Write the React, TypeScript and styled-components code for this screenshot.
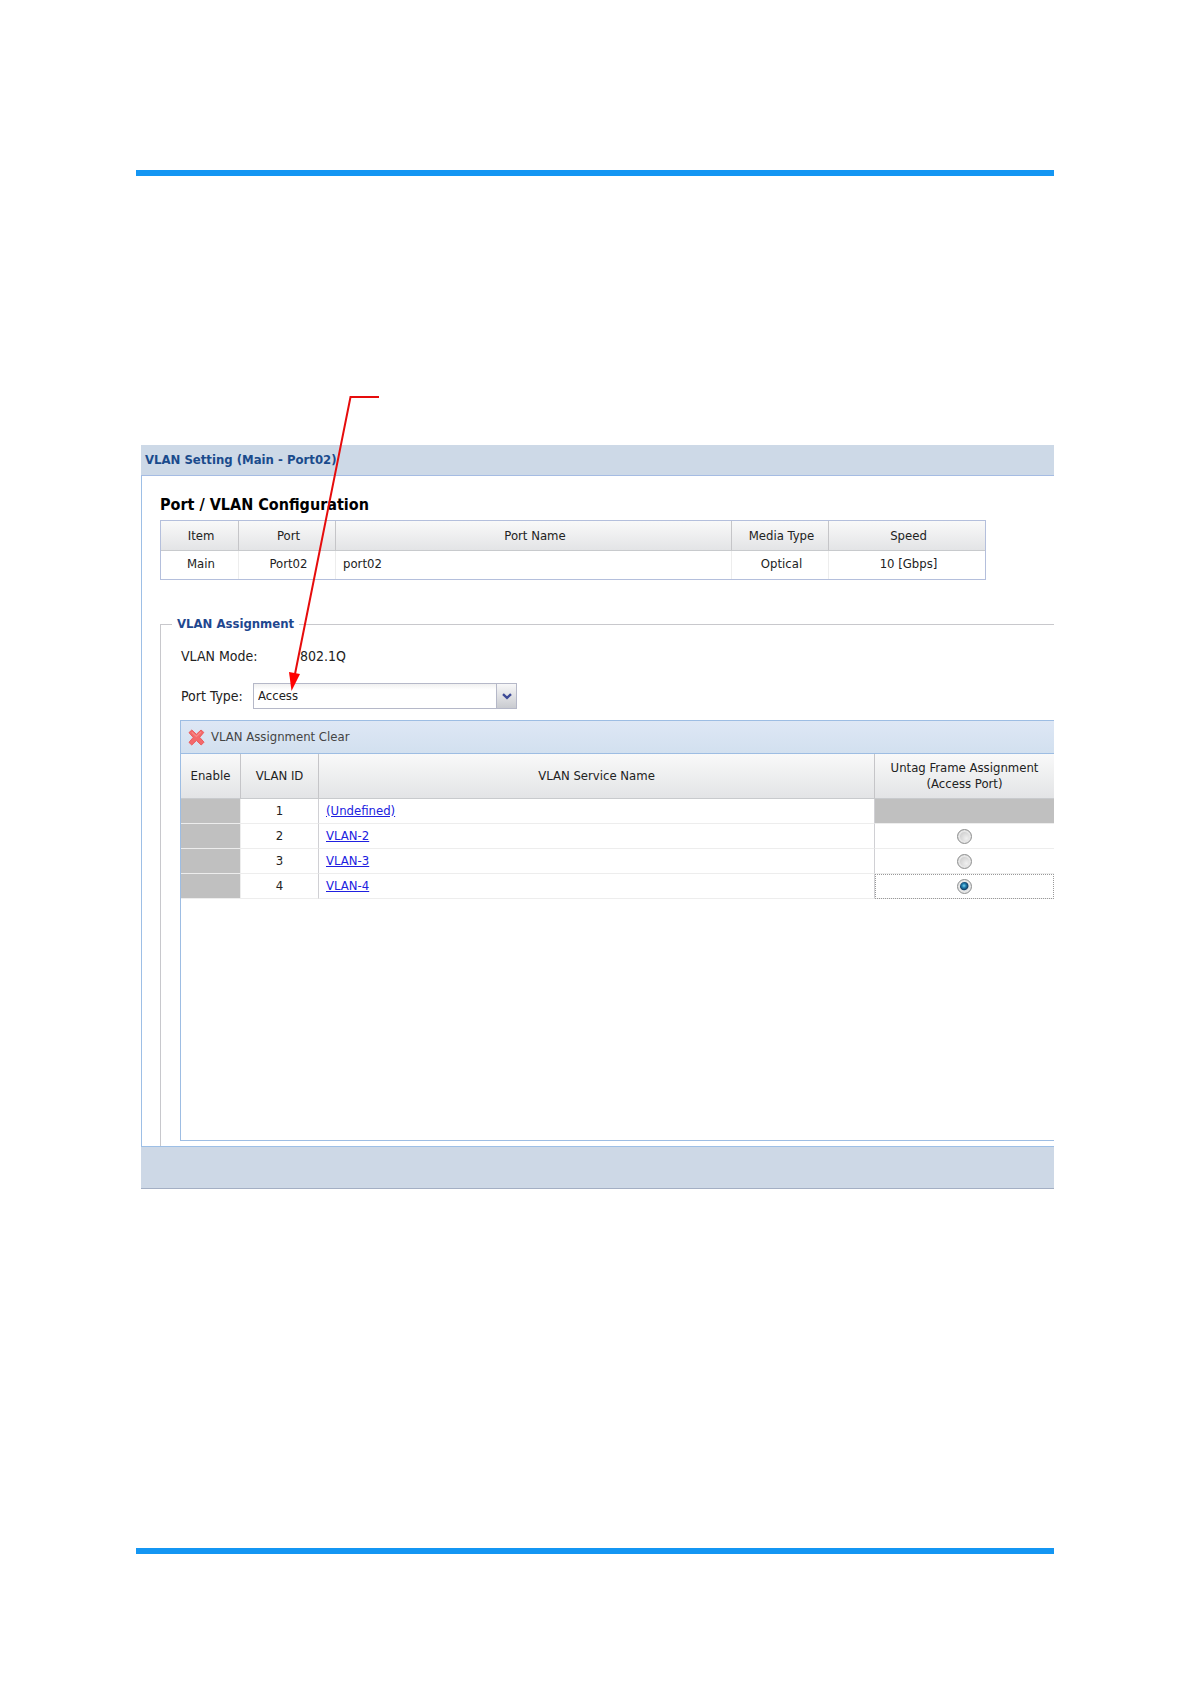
import React, { useState } from "react";
import styled, { createGlobalStyle } from "styled-components";

const GlobalStyle = createGlobalStyle`
  *, *::before, *::after { box-sizing: border-box; }
  body {
    margin: 0;
    background: #fff;
    color: #222;
    font: 13px/20px Tahoma, "DejaVu Sans Condensed", "DejaVu Sans", sans-serif;
  }
`;

const Page = styled.div`
  min-height: 100vh;
  display: flex;
  flex-direction: column;
  padding: 170px 136px 130px;
`;

const Rule = styled.div`
  height: 6px;
  flex: none;
  background: #1496f3;
`;

const Figure = styled.main`
  position: relative;
  margin: 219px 0 auto 5px;
  padding-top: 50px;
`;

const Callout = styled.svg`
  position: absolute;
  top: 0;
  left: 0;
  pointer-events: none;
`;

const TitleBar = styled.h1`
  margin: 0;
  height: 31px;
  padding: 0 4px;
  background: #cdd9e7;
  border-bottom: 1px solid #a5bce3;
  color: #1a4b8c;
  font-size: 13px;
  line-height: 30px;
`;

const Body = styled.section`
  padding: 19px 0 0 18px;
  border-left: 1px solid #9dbfe6;
`;

const Heading = styled.h2`
  margin: 0 0 5px;
  color: #000;
  font-size: 16px;
  line-height: 20px;
`;

const Table = styled.table`
  width: 100%;
  table-layout: fixed;
  border-collapse: separate;
  border-spacing: 0;
`;

const PortTable = styled(Table)`
  max-width: 826px;
  border: 1px solid #b4bfdc;
`;

const Th = styled.th<{ $tall?: boolean }>`
  height: ${(p) => (p.$tall ? 45 : 30)}px;
  padding: 0;
  font-weight: 400;
  line-height: 16px;
  background: linear-gradient(#f9f9f9, #e3e4e6);
  border-right: 1px solid #c5c5c8;
  border-bottom: 1px solid #c8cacd;
  &:last-child { border-right: 0; }
`;

const PortTh = styled(Th)`
  padding-left: 3px;
`;

const Td = styled.td<{ $left?: boolean; $off?: boolean; $focus?: boolean; $strong?: boolean }>`
  height: 25px;
  padding: 0 7px;
  text-align: ${(p) => (p.$left ? "left" : "center")};
  line-height: 20px;
  background: ${(p) => (p.$off ? "#c0c0c0" : "#fff")};
  border-right: 1px solid ${(p) => (p.$strong ? "#d0d0d4" : "#ededed")};
  border-bottom: 1px solid #ededed;
  outline: ${(p) => (p.$focus ? "1px dotted #999" : "none")};
  outline-offset: -1px;
  &:last-child { border-right: 0; }
`;

const PortTd = styled(Td)`
  height: 28px;
  padding: 0 4px 2px 7px;
  border-bottom: 0;
`;

const Fieldset = styled.fieldset`
  min-width: 0;
  margin: 34px 0 0;
  padding: 12px 0 5px 19px;
  border: solid #c8c8cc;
  border-width: 1px 0 0 1px;
`;

const Legend = styled.legend`
  margin-left: -8px;
  padding: 0 5px;
  color: #1f478f;
  font-weight: 700;
`;

const Field = styled.div<{ $gap?: number }>`
  display: flex;
  align-items: center;
  margin-top: ${(p) => p.$gap ?? 0}px;
  padding-left: 1px;
  font-size: 14px;
`;

const ModeLabel = styled.span`
  width: 119px;
`;

const TypeLabel = styled.label`
  width: 72px;
`;

const Combo = styled.div`
  position: relative;
  width: 264px;
  height: 26px;
  border: 1px solid #b5b8c8;
  background: linear-gradient(#f0f0f0, #fff 6px);
`;

const Select = styled.select`
  width: 100%;
  height: 100%;
  padding: 0 24px 0 4px;
  border: 0;
  appearance: none;
  background: transparent;
  color: #222;
  font: inherit;
  font-size: 13px;
`;

const Trigger = styled.span`
  position: absolute;
  top: 0;
  right: 0;
  bottom: 0;
  width: 20px;
  display: grid;
  place-items: center;
  border-left: 1px solid #b5b8c8;
  background: linear-gradient(#f7f7f8, #c9cbd0);
  pointer-events: none;
`;

const GridPanel = styled.div`
  min-height: 421px;
  margin-top: 11px;
  border: solid #9dbde3;
  border-width: 1px 0 1px 1px;
`;

const Toolbar = styled.div`
  height: 33px;
  padding-left: 7px;
  display: flex;
  align-items: center;
  background: linear-gradient(#dee7f5, #d2e0ef);
  border-bottom: 1px solid #9dbde3;
`;

const ClearButton = styled.button`
  display: flex;
  align-items: center;
  gap: 6px;
  padding: 0;
  border: 0;
  background: none;
  color: #444;
  font: inherit;
  cursor: pointer;
`;

const Link = styled.a`
  color: #2020e0;
`;

const Radio = styled.input`
  appearance: none;
  display: block;
  width: 15px;
  height: 15px;
  margin: 0 auto;
  border: 1px solid #8e8f8f;
  border-radius: 50%;
  box-shadow: inset 0 0 0 2px #e6e6e6;
  background: radial-gradient(circle at 65% 65%, #f0f0f0, #bcbcbc);
  &:checked {
    background: radial-gradient(circle at 46% 44%, #7fd4f2 0, #1f7fb0 2px, #123f68 4px, #d8dde0 5px);
  }
`;

const BottomBar = styled.div`
  height: 43px;
  background: #cdd8e6;
  border-top: 1px solid #9dbfe6;
  border-bottom: 1px solid #a3afc4;
`;

const vlans = [
  { id: 1, name: "(Undefined)" },
  { id: 2, name: "VLAN-2" },
  { id: 3, name: "VLAN-3" },
  { id: 4, name: "VLAN-4" },
];

const CrossIcon = () => (
  <svg width="17" height="17" viewBox="0 0 17 17" aria-hidden="true">
    <path
      d="M1 3.6 3.8 1 8.4 5.3 13 1 15.8 3.4 11.7 8.3 16 13.2 13.2 16 8.4 11.5 3.8 16 1 13.4 5.2 8.4Z"
      fill="#f4696b"
      stroke="#ec5a5c"
      strokeLinejoin="round"
    />
    <path d="M3.8 3.2 8.4 7.4 13 3" fill="none" stroke="#f68a88" strokeWidth="1.2" />
  </svg>
);

export default function App() {
  const [untagged, setUntagged] = useState(4);
  const [portType, setPortType] = useState("Access");

  return (
    <>
      <GlobalStyle />
      <Page>
        <Rule />
        <Figure>
          <TitleBar>VLAN Setting (Main - Port02)</TitleBar>
          <Body>
            <Heading>Port / VLAN Configuration</Heading>
            <PortTable>
              <colgroup>
                <col style={{ width: 78 }} />
                <col style={{ width: 97 }} />
                <col />
                <col style={{ width: 97 }} />
                <col style={{ width: 156 }} />
              </colgroup>
              <thead>
                <tr>
                  <PortTh>Item</PortTh>
                  <PortTh>Port</PortTh>
                  <PortTh>Port Name</PortTh>
                  <PortTh>Media Type</PortTh>
                  <PortTh>Speed</PortTh>
                </tr>
              </thead>
              <tbody>
                <tr>
                  <PortTd>Main</PortTd>
                  <PortTd>Port02</PortTd>
                  <PortTd $left>port02</PortTd>
                  <PortTd>Optical</PortTd>
                  <PortTd>10 [Gbps]</PortTd>
                </tr>
              </tbody>
            </PortTable>
            <Fieldset>
              <Legend>VLAN Assignment</Legend>
              <Field>
                <ModeLabel>VLAN Mode:</ModeLabel>
                <span>802.1Q</span>
              </Field>
              <Field $gap={17}>
                <TypeLabel htmlFor="port-type">Port Type:</TypeLabel>
                <Combo>
                  <Select id="port-type" value={portType} onChange={(e) => setPortType(e.target.value)}>
                    <option>Access</option>
                  </Select>
                  <Trigger>
                    <svg width="10" height="7" viewBox="0 0 10 7" aria-hidden="true">
                      <path d="M1 1.2 5 4.8 9 1.2" fill="none" stroke="#3d4a96" strokeWidth="2.4" />
                    </svg>
                  </Trigger>
                </Combo>
              </Field>
              <GridPanel>
                <Toolbar>
                  <ClearButton type="button">
                    <CrossIcon />
                    VLAN Assignment Clear
                  </ClearButton>
                </Toolbar>
                <Table>
                  <colgroup>
                    <col style={{ width: 60 }} />
                    <col style={{ width: 78 }} />
                    <col />
                    <col style={{ width: 179 }} />
                  </colgroup>
                  <thead>
                    <tr>
                      <Th $tall>Enable</Th>
                      <Th $tall>VLAN ID</Th>
                      <Th $tall>VLAN Service Name</Th>
                      <Th $tall>
                        Untag Frame Assignment
                        <br />
                        (Access Port)
                      </Th>
                    </tr>
                  </thead>
                  <tbody>
                    {vlans.map(({ id, name }) => (
                      <tr key={id}>
                        <Td $off />
                        <Td $strong>{id}</Td>
                        <Td $left $strong>
                          <Link href={`#vlan-${id}`}>{name}</Link>
                        </Td>
                        <Td $off={id === 1} $focus={id === untagged}>
                          {id > 1 && (
                            <Radio
                              type="radio"
                              name="untag"
                              aria-label={`Untag frame assignment for ${name}`}
                              checked={id === untagged}
                              onChange={() => setUntagged(id)}
                            />
                          )}
                        </Td>
                      </tr>
                    ))}
                  </tbody>
                </Table>
              </GridPanel>
            </Fieldset>
          </Body>
          <BottomBar />
          <Callout width="240" height="298" viewBox="0 0 240 298" aria-hidden="true">
            <path d="M238 2H209.500L154 279" fill="none" stroke="#e60c0c" strokeWidth="2" />
            <path d="M148 277 159 279 150.500 296Z" fill="#f00" />
          </Callout>
        </Figure>
        <Rule />
      </Page>
    </>
  );
}
